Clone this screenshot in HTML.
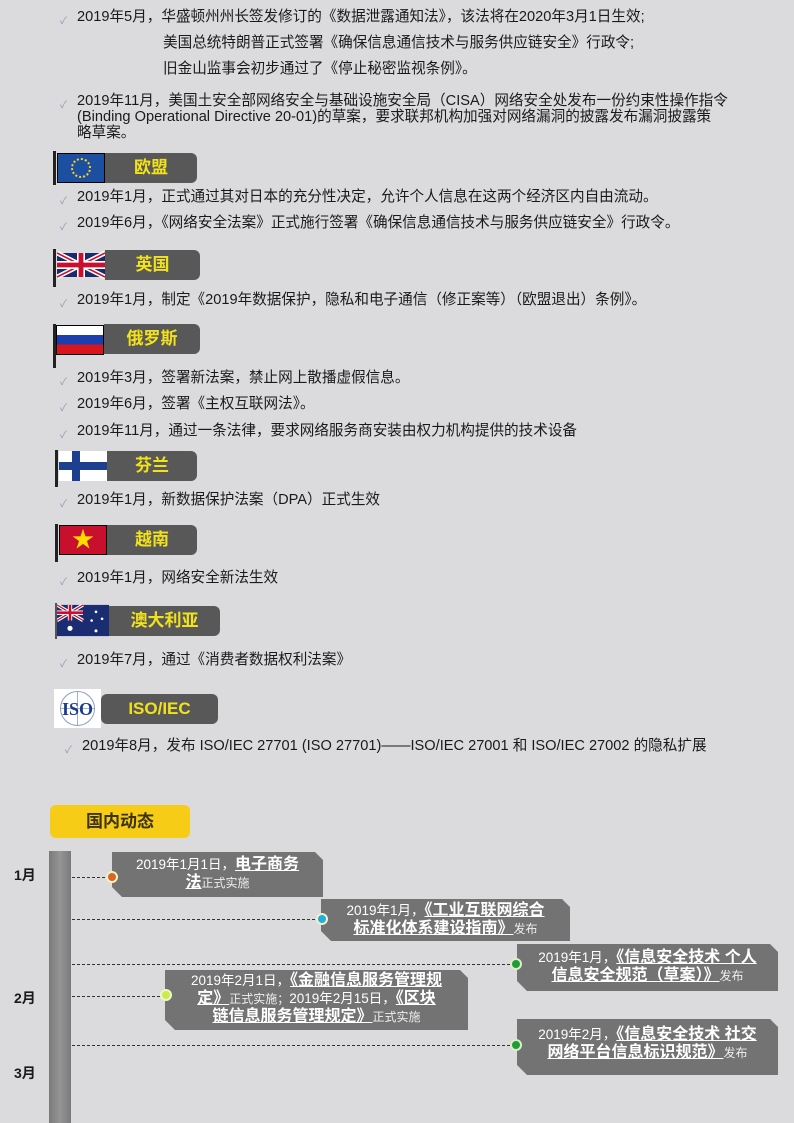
<!DOCTYPE html>
<html><head><meta charset="utf-8"><style>
*{margin:0;padding:0;box-sizing:border-box}
body{width:794px;height:1123px;background:#dbdadc;position:relative;overflow:hidden;font-family:"Liberation Sans","Noto Sans CJK SC",sans-serif;color:#1a1a1a}
.a{position:absolute;white-space:nowrap}
.t{font-size:14.6px;line-height:17px}
.ck{position:absolute;font-size:10px;color:#8a9cb8}
.lab{position:absolute;background:#585858;border-radius:0 6px 6px 0;color:#f2e21a;font-weight:bold;font-size:17px;text-align:center;line-height:30px}
.flag{position:absolute;width:48px;height:30px;overflow:hidden}
.pole{position:absolute;width:3px;background:#222}
.box{position:absolute;background:#737373;color:#fff;text-align:center;font-size:13.5px;line-height:18px;clip-path:polygon(0 0,calc(100% - 8px) 0,100% 8px,100% 100%,10px 100%,0 calc(100% - 10px))}
.box b{font-size:16px;text-decoration:underline}
.box small{font-size:12px;color:#eee}
.dash{position:absolute;border-top:1.3px dashed #333;height:0}
.dot{position:absolute;width:12px;height:12px;border-radius:50%;border:2px solid #f4f0c8}
.m{position:absolute;font-weight:bold;font-size:14px;left:14px}
</style></head><body>

<span class="ck" style="left:60px;top:12px">✓</span><div class="a t" style="left:77px;top:9px">2019年5月，华盛顿州州长签发修订的《数据泄露通知法》，该法将在2020年3月1日生效;</div>
<div class="a t" style="left:163px;top:35px">美国总统特朗普正式签署《确保信息通信技术与服务供应链安全》行政令;</div>
<div class="a t" style="left:163px;top:61px">旧金山监事会初步通过了《停止秘密监视条例》。</div>
<span class="ck" style="left:60px;top:96px">✓</span><div class="a t" style="left:77px;top:93px;line-height:16px">2019年11月，美国土安全部网络安全与基础设施安全局（CISA）网络安全处发布一份约束性操作指令<br>(Binding Operational Directive 20-01)的草案，要求联邦机构加强对网络漏洞的披露发布漏洞披露策<br>略草案。</div>

<!-- EU -->
<div class="pole" style="left:53px;top:151px;height:34px"></div>
<div class="flag" style="left:57px;top:153px;background:#1d4fa0;border:1px solid #000"><span style="position:absolute;left:13px;top:4px;width:20px;height:20px;border:2px dotted #f6d21a;border-radius:50%"></span></div>
<div class="lab" style="left:105px;top:153px;width:92px">欧盟</div>
<span class="ck" style="left:60px;top:192px">✓</span><div class="a t" style="left:77px;top:189px">2019年1月，正式通过其对日本的充分性决定，允许个人信息在这两个经济区内自由流动。</div>
<span class="ck" style="left:60px;top:218px">✓</span><div class="a t" style="left:77px;top:215px">2019年6月，《网络安全法案》正式施行签署《确保信息通信技术与服务供应链安全》行政令。</div>

<!-- UK -->
<div class="pole" style="left:53px;top:249px;height:38px"></div>
<svg class="flag" style="left:57px;top:250px" viewBox="0 0 60 30"><rect width="60" height="30" fill="#1b2a6b"/><path d="M0 0L60 30M60 0L0 30" stroke="#fff" stroke-width="6"/><path d="M0 0L60 30M60 0L0 30" stroke="#c8102e" stroke-width="2"/><path d="M30 0V30M0 15H60" stroke="#fff" stroke-width="10"/><path d="M30 0V30M0 15H60" stroke="#c8102e" stroke-width="6"/></svg>
<div class="lab" style="left:105px;top:250px;width:95px">英国</div>
<span class="ck" style="left:60px;top:295px">✓</span><div class="a t" style="left:77px;top:292px">2019年1月，制定《2019年数据保护，隐私和电子通信（修正案等）（欧盟退出）条例》。</div>

<!-- Russia -->
<div class="pole" style="left:53px;top:324px;height:44px"></div>
<div class="flag" style="left:56px;top:325px;border:1px solid #000;background:linear-gradient(#fff 33%,#1c3fb0 33%,#1c3fb0 66%,#d8141c 66%)"></div>
<div class="lab" style="left:104px;top:324px;width:96px">俄罗斯</div>
<span class="ck" style="left:60px;top:373px">✓</span><div class="a t" style="left:77px;top:370px">2019年3月，签署新法案，禁止网上散播虚假信息。</div>
<span class="ck" style="left:60px;top:399px">✓</span><div class="a t" style="left:77px;top:396px">2019年6月，签署《主权互联网法》。</div>
<span class="ck" style="left:60px;top:426px">✓</span><div class="a t" style="left:77px;top:423px">2019年11月，通过一条法律，要求网络服务商安装由权力机构提供的技术设备</div>

<!-- Finland -->
<div class="pole" style="left:55px;top:450px;height:37px"></div>
<div class="flag" style="left:59px;top:451px;background:#fff"><span style="position:absolute;left:13px;top:0;width:8px;height:30px;background:#1c3f8e"></span><span style="position:absolute;left:0;top:11px;width:48px;height:8px;background:#1c3f8e"></span></div>
<div class="lab" style="left:107px;top:451px;width:90px">芬兰</div>
<span class="ck" style="left:60px;top:495px">✓</span><div class="a t" style="left:77px;top:492px">2019年1月，新数据保护法案（DPA）正式生效</div>

<!-- Vietnam -->
<div class="pole" style="left:55px;top:524px;height:38px"></div>
<div class="flag" style="left:59px;top:525px;background:#c8102e;border:1px solid #000;color:#ffdd00;font-size:22px;text-align:center;line-height:28px">★</div>
<div class="lab" style="left:107px;top:525px;width:90px">越南</div>
<span class="ck" style="left:60px;top:573px">✓</span><div class="a t" style="left:77px;top:570px">2019年1月，网络安全新法生效</div>

<!-- Australia -->
<div class="pole" style="left:55px;top:603px;height:36px;width:2px;background:#555"></div>
<svg class="flag" style="left:57px;top:604px;width:52px;height:33px" viewBox="0 0 60 36"><rect width="60" height="36" fill="#1a2d72"/><path d="M0 0L30 18M30 0L0 18" stroke="#fff" stroke-width="4"/><path d="M0 0L30 18M30 0L0 18" stroke="#c8102e" stroke-width="1.5"/><path d="M15 0V18M0 9H30" stroke="#fff" stroke-width="5"/><path d="M15 0V18M0 9H30" stroke="#c8102e" stroke-width="3"/><g fill="#fff"><circle cx="15" cy="27" r="3"/><circle cx="45" cy="8" r="1.5"/><circle cx="52" cy="16" r="1.5"/><circle cx="40" cy="18" r="1.5"/><circle cx="45" cy="30" r="1.7"/></g></svg>
<div class="lab" style="left:109px;top:606px;width:111px">澳大利亚</div>
<span class="ck" style="left:60px;top:655px">✓</span><div class="a t" style="left:77px;top:652px">2019年7月，通过《消费者数据权利法案》</div>

<!-- ISO -->
<div style="position:absolute;left:54px;top:689px;width:47px;height:39px;background:#fff"><svg width="47" height="39" viewBox="0 0 47 39"><ellipse cx="23.5" cy="19.5" rx="17" ry="17" fill="none" stroke="#8aa0c0" stroke-width="1"/><path d="M6.5 19.5H40.5M23.5 2.5V36.5" stroke="#8aa0c0" stroke-width=".8"/><text x="23.5" y="26" text-anchor="middle" font-family="Liberation Serif" font-weight="bold" font-size="18" fill="#1a3d8c">ISO</text></svg></div>
<div class="lab" style="left:101px;top:694px;width:117px;border-radius:6px">ISO/IEC</div>
<span class="ck" style="left:65px;top:741px">✓</span><div class="a t" style="left:82px;top:738px">2019年8月，发布 ISO/IEC 27701 (ISO 27701)——ISO/IEC 27001 和 ISO/IEC 27002 的隐私扩展</div>

<!-- domestic -->
<div style="position:absolute;left:50px;top:805px;width:140px;height:33px;background:#f6cc16;border-radius:6px;font-weight:bold;font-size:17px;line-height:33px;text-align:center;color:#3a3210">国内动态</div>
<div style="position:absolute;left:49px;top:851px;width:22px;height:272px;background:linear-gradient(90deg,#7a7a7a,#959595,#7a7a7a)"></div>
<div class="m" style="top:865px">1月</div>
<div class="m" style="top:988px">2月</div>
<div class="m" style="top:1063px">3月</div>

<div class="dash" style="left:72px;top:877px;width:38px"></div>
<div class="dash" style="left:72px;top:919px;width:248px"></div>
<div class="dash" style="left:72px;top:964px;width:443px"></div>
<div class="dash" style="left:72px;top:996px;width:93px"></div>
<div class="dash" style="left:72px;top:1045px;width:443px"></div>

<div class="box" style="left:112px;top:852px;width:211px;height:45px;padding-top:4px">2019年1月1日，<b>电子商务<br>法</b><small>正式实施</small></div>
<div class="box" style="left:321px;top:899px;width:249px;height:42px;padding-top:3px">2019年1月，<b>《工业互联网综合<br>标准化体系建设指南》</b><small>发布</small></div>
<div class="box" style="left:517px;top:944px;width:261px;height:47px;padding-top:5px">2019年1月，<b>《信息安全技术 个人<br>信息安全规范（草案）》</b><small>发布</small></div>
<div class="box" style="left:165px;top:970px;width:303px;height:60px;padding-top:2px">2019年2月1日，<b>《金融信息服务管理规<br>定》</b><small>正式实施；</small>2019年2月15日，<b>《区块<br>链信息服务管理规定》</b><small>正式实施</small></div>
<div class="box" style="left:517px;top:1019px;width:261px;height:56px;padding-top:7px">2019年2月，<b>《信息安全技术 社交<br>网络平台信息标识规范》</b><small>发布</small></div>

<div class="dot" style="left:106px;top:871px;background:#d9661f"></div>
<div class="dot" style="left:316px;top:913px;background:#1eaee0"></div>
<div class="dot" style="left:510px;top:958px;background:#1f9a3c;border-color:#d8f0c0"></div>
<div class="dot" style="left:160px;top:989px;background:#c9ec4a;border-color:#eef6c8"></div>
<div class="dot" style="left:510px;top:1039px;background:#1f9a3c;border-color:#d8f0c0"></div>
</body></html>
